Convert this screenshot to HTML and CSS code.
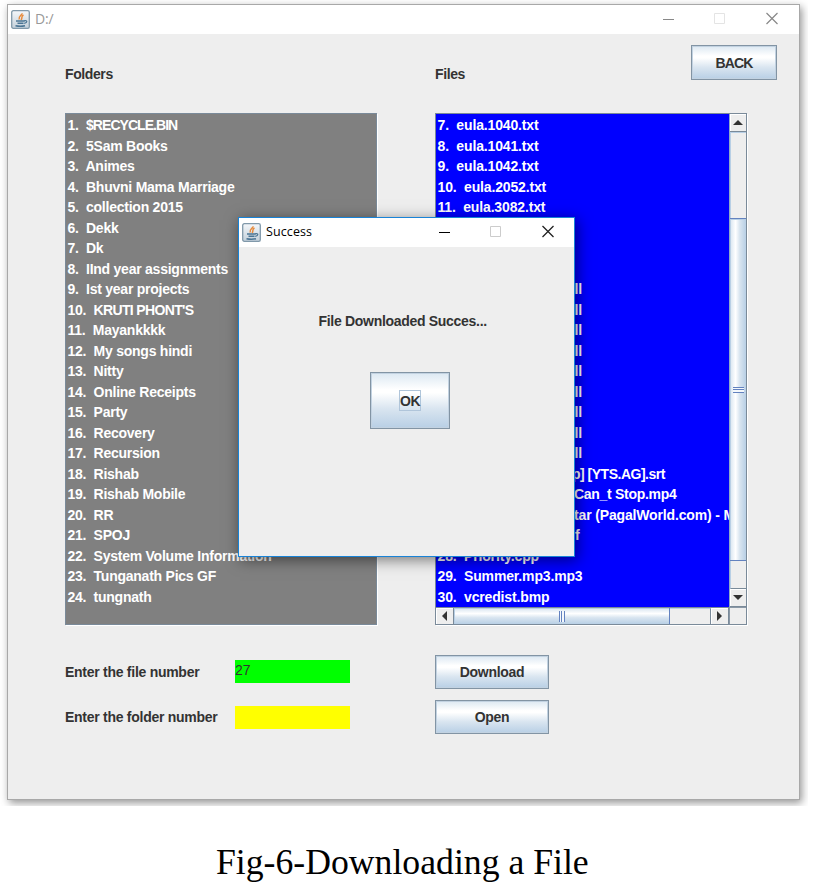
FILE: index.html
```html
<!DOCTYPE html>
<html lang="en">
<head>
<meta charset="utf-8">
<title>D:/</title>
<link rel="stylesheet" href="styles.css">
</head>
<body>
<svg width="0" height="0" class="defs">
  <defs>
    <linearGradient id="tile" x1="0" y1="0" x2="0" y2="1"><stop offset="0" stop-color="#f4f7fa"/><stop offset="1" stop-color="#c3d0da"/></linearGradient>
    <symbol id="java" viewBox="0 0 19 19">
      <rect x=".7" y=".7" width="17.6" height="17.6" rx="1.6" fill="url(#tile)" stroke="#8199aa" stroke-width="1.3"/>
      <path d="M11 3.200C11.500 5 7 6 8.200 9.500M12.500 5C9.500 6.500 12 8 10 10" fill="none" stroke="#e78b3d" stroke-width="1.5"/>
      <path d="M5 11h8.500M6.500 13.200h6M4.500 15.800q5 1 9.500 0" fill="none" stroke="#4b7594" stroke-width="1.400"/>
      <path d="M13 10.800c4-.8 3.500 2 .2 2.600" fill="none" stroke="#4b7594" stroke-width="1.200"/>
    </symbol>
  </defs>
</svg>
<div class="figure">
  <main class="window">
    <header class="titlebar main-title">
      <svg class="java"><use href="#java"/></svg>
      <span class="title">D:/</span>
      <svg class="controls" width="120" height="14" viewBox="0 0 120 14" fill="none"><path d="M1 7.500h11" stroke="#888"/><path d="M52.500 1.500h10v10h-10z" stroke="#e4e4e4"/><path d="M104.500 1l11 11m0-11l-11 11" stroke="#888" stroke-width="1.200"/></svg>
    </header>
    <div class="content">
      <div class="headings"><b class="h-folders">Folders</b><b class="h-files">Files</b><button class="btn back">BACK</button></div>
      <div class="panes">
        <ol class="pane folders">
          <li>1.&nbsp; <span class="caps">$RECYCLE.BIN</span></li><li>2.&nbsp; 5Sam Books</li><li>3.&nbsp; Animes</li><li>4.&nbsp; Bhuvni Mama Marriage</li><li>5.&nbsp; collection 2015</li><li>6.&nbsp; Dekk</li><li>7.&nbsp; Dk</li><li>8.&nbsp; IInd year assignments</li><li>9.&nbsp; Ist year projects</li><li>10.&nbsp; <span class="kruti">KRUTI PHONT'S</span></li><li>11.&nbsp; Mayankkkk</li><li>12.&nbsp; My songs hindi</li><li>13.&nbsp; Nitty</li><li>14.&nbsp; Online Receipts</li><li>15.&nbsp; Party</li><li>16.&nbsp; Recovery</li><li>17.&nbsp; Recursion</li><li>18.&nbsp; Rishab</li><li>19.&nbsp; Rishab Mobile</li><li>20.&nbsp; RR</li><li>21.&nbsp; SPOJ</li><li>22.&nbsp; System Volume Information</li><li>23.&nbsp; Tunganath Pics GF</li><li>24.&nbsp; tungnath</li>
        </ol>
        <div class="pane files">
          <ol class="file-list">
            <li>7.&nbsp; eula.1040.txt</li><li>8.&nbsp; eula.1041.txt</li><li>9.&nbsp; eula.1042.txt</li><li>10.&nbsp; eula.2052.txt</li><li>11.&nbsp; eula.3082.txt</li><li></li><li></li><li></li><li class="tail dll">ll</li><li class="tail dll">ll</li><li class="tail dll">ll</li><li class="tail dll">ll</li><li class="tail dll">ll</li><li class="tail dll">ll</li><li class="tail dll">ll</li><li class="tail dll">ll</li><li class="tail dll">ll</li><li class="tail srt">p] [YTS.AG].srt</li><li class="tail mp4">Can_t Stop.mp4</li><li class="tail star">tar (PagalWorld.com) - M</li><li class="tail pdf">f</li><li>28.&nbsp; Priority.cpp</li><li>29.&nbsp; Summer.mp3.mp3</li><li>30.&nbsp; vcredist.bmp</li>
          </ol>
          <div class="vbar"><span class="step"><i class="up"></i></span><span class="vgap"></span><span class="vthumb"><i></i></span><span class="vrest"></span><span class="step"><i class="down"></i></span></div>
          <div class="hbar"><span class="hstep"><i class="left"></i></span><span class="hthumb"><i></i></span><span class="hrest"></span><span class="hstep"><i class="right"></i></span></div>
          <span class="corner"></span>
        </div>
      </div>
      <div class="form">
        <label>Enter the file number</label><div class="field green">27</div><button class="btn">Download</button>
        <label>Enter the folder number</label><div class="field yellow"></div><button class="btn">Open</button>
      </div>
    </div>
  </main>
  <section class="dialog">
    <header class="titlebar">
      <svg class="java"><use href="#java"/></svg>
      <span class="title">Success</span>
      <svg class="controls" width="120" height="14" viewBox="0 0 120 14" fill="none"><path d="M1 7.500h11" stroke="#000"/><path d="M52.500 1.500h10v10h-10z" stroke="#ccc"/><path d="M104.500 1l11 11m0-11l-11 11" stroke="#222" stroke-width="1.300"/></svg>
    </header>
    <p class="message">File Downloaded Succes...</p>
    <button class="btn ok"><span>OK</span></button>
  </section>
</div>
<p class="caption">Fig-6-Downloading a File</p>
</body>
</html>
```
FILE: styles.css
```css
* { box-sizing: border-box; }
body { margin: 0; width: 813px; height: 883px; overflow: hidden; background: #fff; color: #333; font: bold 14px "Liberation Sans", Arial, sans-serif; letter-spacing: -.27px; }
.defs { position: absolute; }
ol, p { margin: 0; padding: 0; list-style: none; }
.figure { position: relative; width: 808px; height: 806px; padding: 4px 0 0 7px; overflow: hidden; }
.window { width: 793px; height: 796px; border: 1px solid #a8a8a8; background: #eee; box-shadow: 2px 3px 8px rgba(0,0,0,.42); }
.titlebar { display: flex; align-items: center; height: 29px; background: #fff; padding: 0 16px 1px 3px; color: #000; }
.java { width: 19px; height: 19px; flex: none; }
.title { margin-left: 5px; font: 12.5px/18px "Open Sans", "Noto Sans", sans-serif; letter-spacing: .1px; }
.controls { margin-left: auto; }
.main-title { padding-right: 17px; }
.main-title .title { color: #999; font-size: 14px; letter-spacing: -.2px; }
.content { padding: 0 21px 0 57px; }
.headings { display: flex; height: 79px; padding-top: 11px; }
.headings b { width: 370px; padding-top: 21px; line-height: 16px; letter-spacing: -.4px; }
.headings .h-files { width: 256px; }
.btn { padding: 0; border: 1px solid #8294a4; box-shadow: inset 0 0 0 1px #c2d2e1; background: linear-gradient(#dce8f2 0, #fff 30%, #fff 36%, #d9e5f0 65%, #b8cfe5 100%); color: #333; font: inherit; letter-spacing: -.3px; }
.back { width: 86px; height: 35px; letter-spacing: -.9px; }
.panes { display: flex; gap: 58px; }
.pane { width: 312px; height: 512px; border: 1px solid #7a8a99; box-shadow: 1px 1px 0 #fff; color: #fff; line-height: 20.5px; }
.folders { background: #808080; padding: 1.4px 0 0 1.5px; letter-spacing: -.24px; }
.pane li { height: 20.5px; white-space: nowrap; }
.caps { letter-spacing: -.95px; }
.kruti { letter-spacing: -.65px; }
.files { display: grid; grid-template: 493px 17px / 293px 17px; background: #eee; }
.file-list { background: #00f; padding: 1.4px 0 0 1.5px; overflow: hidden; letter-spacing: -.15px; }
.dll { padding-left: 137px; }
.srt { padding-left: 134.5px; letter-spacing: -.5px; }
.mp4 { padding-left: 136.5px; letter-spacing: -.3px; }
.star { padding-left: 136.5px; }
.pdf { padding-left: 137.5px; }
.vbar { display: flex; flex-direction: column; border-left: 1px solid #8da9c8; }
.step { height: 18px; display: flex; align-items: center; justify-content: center; border-bottom: 1px solid #7a8a99; box-shadow: inset 1px 1px #fff; }
.vgap { height: 86px; border-top: 1px solid #b8cfe5; border-left: 1px solid #b8cfe5; }
.vthumb { height: 343px; display: flex; align-items: center; justify-content: center; border: solid #6382bf; border-width: 1px 0; box-shadow: inset 1px 1px #b8cfe5; background: linear-gradient(90deg, #d7e4f0, #fff 35%, #d9e5f0 60%, #b8cfe5); }
.vthumb i { width: 11px; height: 6px; background: repeating-linear-gradient(#6382bf 0 1px, #f4f8fc 1px 2.5px); }
.vrest { flex: 1; border-left: 1px solid #b8cfe5; border-bottom: 1px solid #7a8a99; }
.hbar { display: flex; border-top: 1px solid #7a8a99; }
.hstep { width: 18px; display: flex; align-items: center; justify-content: center; box-shadow: inset 1px 1px #fff; border-right: 1px solid #7a8a99; }
.hthumb { width: 216px; display: flex; align-items: center; justify-content: center; border-right: 1px solid #6382bf; box-shadow: inset 1px 1px #b8cfe5; background: linear-gradient(#d7e4f0, #fff 35%, #d9e5f0 60%, #b8cfe5); }
.hthumb i { width: 6px; height: 11px; background: repeating-linear-gradient(90deg, #6382bf 0 1px, #f4f8fc 1px 2.5px); }
.hrest { flex: 1; border-top: 1px solid #b8cfe5; border-right: 1px solid #7a8a99; }
.corner { border: solid #8a98a6; border-width: 1px 0 0 1px; }
.up, .down, .left, .right { border: 5px solid transparent; }
.up { border-top: 0; border-bottom-color: #333; }
.down { border-bottom: 0; border-top-color: #333; }
.left { border-left: 0; border-right-color: #333; }
.right { border-right: 0; border-left-color: #333; }
.form { display: grid; grid-template: 34px 34px / 170px 115px 114px; row-gap: 11.5px; padding-top: 29.5px; align-items: center; justify-content: start; }
.form .btn { margin-left: 85px; width: 114px; height: 34px; }
.field { width: 115px; height: 23px; font-weight: normal; font-size: 14px; line-height: 21px; letter-spacing: 0; }
.green { background: #0f0; }
.yellow { background: #ff0; }
.dialog { position: absolute; left: 238px; top: 217px; width: 337px; height: 340px; border: 1px solid #1883d7; background: #eee; box-shadow: 2px 3px 14px rgba(0,0,0,.5); }
.message { margin: 66px 0 0 79.5px; line-height: 16px; white-space: nowrap; letter-spacing: -.3px; }
.ok { display: block; width: 80px; height: 57px; margin: 43px 0 0 131px; }
.ok span { display: inline-block; border: 1px solid #b0c5da; height: 21px; line-height: 20px; letter-spacing: -.6px; }
.caption { padding-top: 34px; height: 77px; margin-left: 216px; font: 35.7px/44px "Liberation Serif", "Times New Roman", serif; letter-spacing: 0; color: #000; white-space: nowrap; }
```
